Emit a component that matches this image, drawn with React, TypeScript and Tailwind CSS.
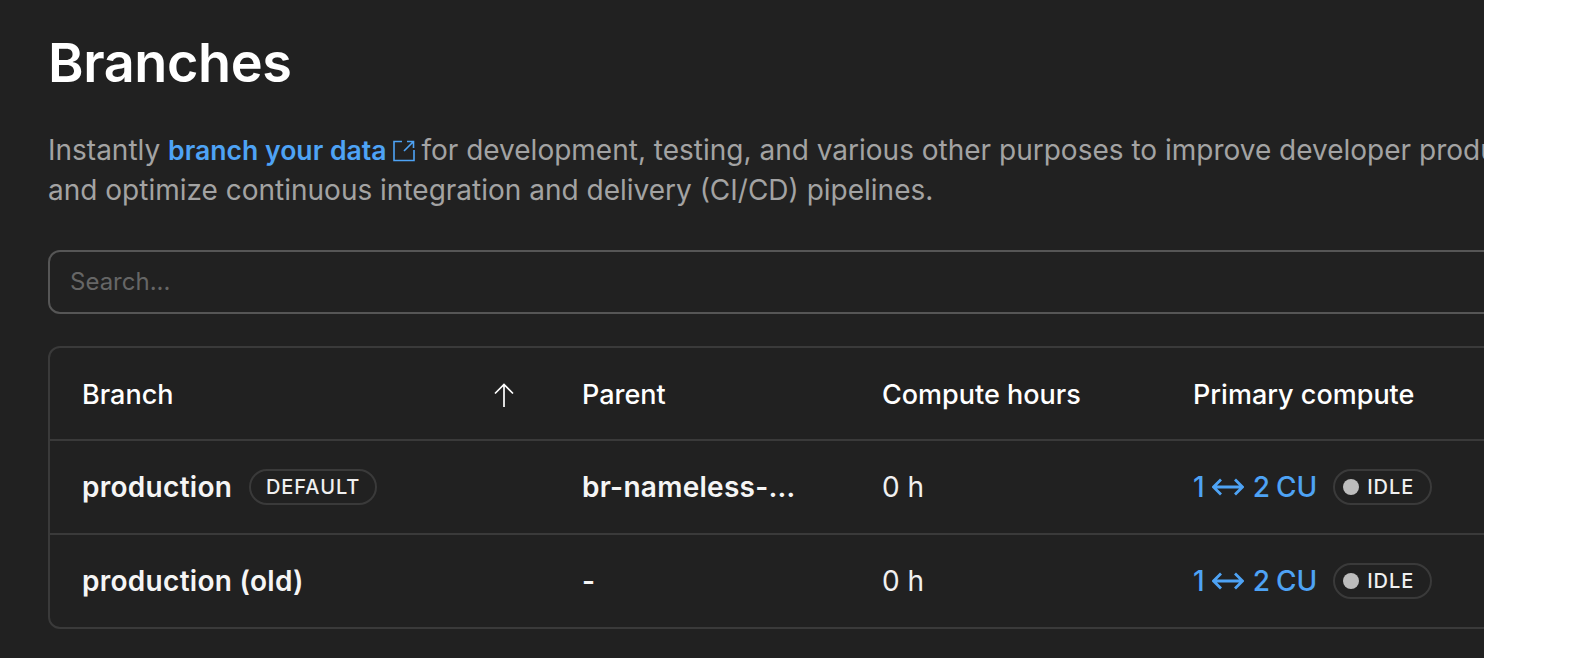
function ExternalIcon() {
  return (
    <svg viewBox="0 0 22 22" className="inline-block w-[22px] h-[22px] ml-[6px] -mr-[1px] align-[-2px]" fill="none" stroke="#4ea3f5" strokeWidth="1.6">
      <path d="M9 1.500H1v19h20V10" />
      <path d="M11 11L20.500 1.500M14 1.500h6.500V8" />
    </svg>
  );
}

function SortArrow() {
  return (
    <svg viewBox="0 0 20 24" className="w-5 h-6" fill="none" stroke="#ffffff" strokeWidth="1.7">
      <path d="M10 24V1.500M1 10.500L10 1.500L19 10.500" />
    </svg>
  );
}

function ComputeLink() {
  return (
    <span className="flex items-center text-[#4ea3f5] text-[28px] font-medium">
      <span>1</span>
      <svg viewBox="0 0 32 20" className="w-[32px] h-[20px] ml-[7px] mr-[9px]" fill="none" stroke="#4ea3f5" strokeWidth="2.8">
        <path d="M1.500 10h29M9 2.500L1.500 10L9 17.500M23 2.500l7.500 7.500l-7.500 7.500" />
      </svg>
      <span>2</span>
      <span className="ml-[6px]">CU</span>
    </span>
  );
}

function IdleBadge() {
  return (
    <span className="ml-[16px] flex items-center h-[36px] w-[99px] rounded-full border-2 border-[#3a3a3a] pl-[8px]">
      <span className="w-4 h-4 rounded-full bg-[#bdbdbd]" />
      <span className="ml-2 text-[20px] font-medium tracking-[0.05em] text-[#f0f0f0]">IDLE</span>
    </span>
  );
}

const headerCell = "flex items-center pt-[3px] text-[27px] font-medium text-white";
const rowCell = "flex items-center border-t-2 border-[#3a3a3a] h-[94px]";
const nameCell = "text-[28px] font-semibold tracking-[0.01em] text-[#f5f5f5]";

export default function App() {
  return (
    <div className="flex h-[658px] w-[1592px] bg-white overflow-hidden" style={{ fontFamily: "Inter, sans-serif" }}>
      <div className="w-[1484px] bg-[#212121] overflow-hidden pl-12">
        <div className="w-[1600px]">
          <h1 className="mt-[27px] text-[54px] leading-[72px] font-semibold tracking-[-0.4px] text-white">Branches</h1>
          <p className="mt-[31px] text-[28px] leading-[40px] text-[#a3a3a3] whitespace-nowrap">
            Instantly <a className="text-[26.600px] font-semibold text-[#4ea3f5]">branch your data<ExternalIcon /></a> for development, testing, and various other purposes to improve developer productivity
            <br />
            and optimize continuous integration and delivery (CI/CD) pipelines.
          </p>
          <div className="mt-[40px] flex items-center h-[64px] rounded-xl border-2 border-[#565656] px-5 text-[24px] text-[#666666]">
            Search...
          </div>
          <div className="mt-[32px] rounded-xl border-2 border-[#3a3a3a]">
            <div className="grid grid-cols-[500px_300px_310px_1fr] text-white">
              <div className={`${headerCell} h-[91px] pl-[32px] justify-between pr-[36px]`}>
                Branch
                <SortArrow />
              </div>
              <div className={`${headerCell} pl-[32px]`}>Parent</div>
              <div className={`${headerCell} pl-[32px]`}>Compute hours</div>
              <div className={`${headerCell} pl-[33px]`}>Primary compute</div>

              <div className={`${rowCell} ${nameCell} pl-[32px]`}>
                production
                <span className="ml-[17px] flex items-center justify-center h-[36px] w-[128px] rounded-full border-2 border-[#3a3a3a] text-[20px] font-medium tracking-[0.05em] text-[#f0f0f0]">DEFAULT</span>
              </div>
              <div className={`${rowCell} ${nameCell} pl-[32px]`}>br-nameless-…</div>
              <div className={`${rowCell} pl-[32px] text-[28px] text-[#f0f0f0]`}>0 h</div>
              <div className={`${rowCell} pl-[33px]`}>
                <ComputeLink />
                <IdleBadge />
              </div>

              <div className={`${rowCell} ${nameCell} pl-[32px]`}>production (old)</div>
              <div className={`${rowCell} ${nameCell} pl-[32px]`}>-</div>
              <div className={`${rowCell} pl-[32px] text-[28px] text-[#f0f0f0]`}>0 h</div>
              <div className={`${rowCell} pl-[33px]`}>
                <ComputeLink />
                <IdleBadge />
              </div>
            </div>
          </div>
        </div>
      </div>
    </div>
  );
}
